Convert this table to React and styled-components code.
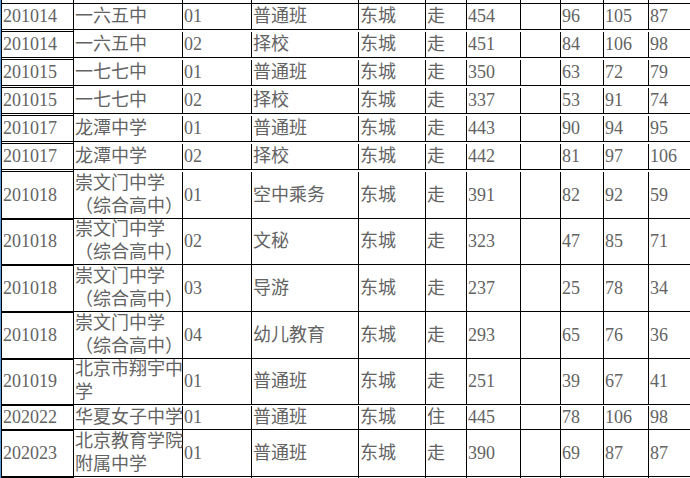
import React from "react";
import styled, { createGlobalStyle } from "styled-components";

const Global = createGlobalStyle`
  html, body { margin: 0; padding: 0; background: #fff; overflow: hidden; }
  body { width: 690px; height: 478px; }
`;

const COLS = "72px 109px 69px 107px 67px 41px 54px 40px 43px 45px 60px";

const Frame = styled.div`
  border-left: 1px solid #5b9bd5;
  width: 689px;
  height: 478px;
  overflow: hidden;
`;

const Table = styled.div`
  border-left: 1px solid #000;
  display: flex;
  flex-direction: column;
  width: 720px;
  font-family: "Liberation Serif", "Noto Sans CJK SC", serif;
  font-size: 18px;
  color: #636363;
`;

const Row = styled.div`
  display: grid;
  grid-template-columns: ${COLS};
  height: ${(p) => p.$h}px;
`;

const Cell = styled.div`
  box-sizing: border-box;
  border-right: 1px solid #000;
  border-bottom: 1px solid #000;
  padding-left: 1px;
  display: flex;
  flex-direction: column;
  justify-content: center;
  line-height: 23px;
  white-space: nowrap;
  overflow: visible;
`;

const Line = styled.span`
  display: block;
`;

const NAME2 = ["崇文门中学", "（综合高中）"];

const rows = [
  ["201014", ["一六五中"], "01", "普通班", "走", "454", "96", "105", "87", 28],
  ["201014", ["一六五中"], "02", "择校", "走", "451", "84", "106", "98", 28],
  ["201015", ["一七七中"], "01", "普通班", "走", "350", "63", "72", "79", 28],
  ["201015", ["一七七中"], "02", "择校", "走", "337", "53", "91", "74", 28],
  ["201017", ["龙潭中学"], "01", "普通班", "走", "443", "90", "94", "95", 28],
  ["201017", ["龙潭中学"], "02", "择校", "走", "442", "81", "97", "106", 28],
  ["201018", NAME2, "01", "空中乘务", "走", "391", "82", "92", "59", 46],
  ["201018", NAME2, "02", "文秘", "走", "323", "47", "85", "71", 47],
  ["201018", NAME2, "03", "导游", "走", "237", "25", "78", "34", 47],
  ["201018", NAME2, "04", "幼儿教育", "走", "293", "65", "76", "36", 46],
  ["201019", ["北京市翔宇中", "学"], "01", "普通班", "走", "251", "39", "67", "41", 48],
  ["202022", ["华夏女子中学"], "01", "普通班", "住", "445", "78", "106", "98", 24],
  ["202023", ["北京教育学院", "附属中学"], "01", "普通班", "走", "390", "69", "87", "87", 47],
];

const Empty = ({ h }) => (
  <Row $h={h}>
    {Array.from({ length: 11 }).map((_, i) => (
      <Cell key={i} />
    ))}
  </Row>
);

export default function App() {
  return (
    <>
      <Global />
      <Frame>
        <Table>
          <Empty h={4} />
          {rows.map((r, i) => (
            <Row key={i} $h={r[9]}>
              <Cell>{r[0]}</Cell>
              <Cell>
                {r[1].map((t, j) => (
                  <Line key={j}>{t}</Line>
                ))}
              </Cell>
              <Cell>{r[2]}</Cell>
              <Cell>{r[3]}</Cell>
              <Cell>东城</Cell>
              <Cell>{r[4]}</Cell>
              <Cell>{r[5]}</Cell>
              <Cell />
              <Cell>{r[6]}</Cell>
              <Cell>{r[7]}</Cell>
              <Cell>{r[8]}</Cell>
              <Cell />
            </Row>
          ))}
          <Empty h={30} />
        </Table>
      </Frame>
    </>
  );
}
